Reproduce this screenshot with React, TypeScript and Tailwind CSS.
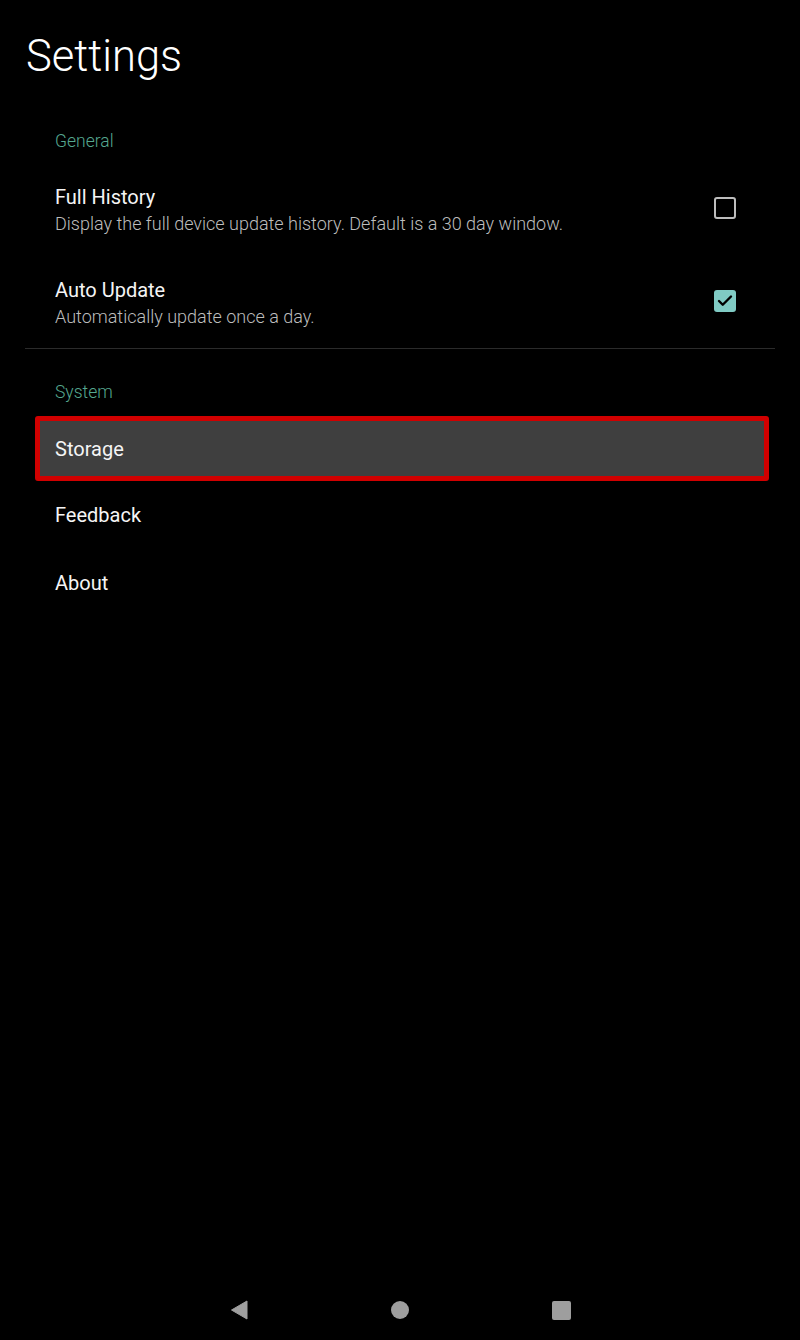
import { Check } from 'lucide-react'

const systemItems = ['Storage', 'Feedback', 'About']

const Checkbox = ({ checked }: { checked: boolean }) =>
  checked ? (
    <div className="mt-[13px] flex h-[22px] w-[22px] items-center justify-center rounded-[3px] bg-[#80cbc4]">
      <Check size={18} strokeWidth={3.2} className="text-black" />
    </div>
  ) : (
    <div className="mt-[13px] h-[22px] w-[22px] rounded-[3px] border-2 border-[#bdbdbd]" />
  )

const ToggleRow = ({ title, summary, checked }: { title: string; summary: string; checked: boolean }) => (
  <div className="flex items-start justify-between pl-[55px] pr-[64px]">
    <div className="flex flex-col">
      <span className="text-[20px] leading-[27px] text-[#f5f5f5]">{title}</span>
      <span className="text-[18px] font-light leading-[26px] text-[#bdbdbd]">{summary}</span>
    </div>
    <Checkbox checked={checked} />
  </div>
)

export default function App() {
  return (
    <div className="flex h-[1340px] w-full flex-col bg-black font-['Roboto',sans-serif]">
      <h1 className="mt-[34px] pl-[26px] text-[43.5px] font-light leading-[45px] text-white">Settings</h1>

      <div className="mt-[50px] pl-[55px] text-[17.5px] font-light leading-[24px] text-[#55a78f]">General</div>

      <div className="mt-[31px]">
        <ToggleRow
          title="Full History"
          summary="Display the full device update history. Default is a 30 day window."
          checked={false}
        />
      </div>
      <div className="mt-[40px]">
        <ToggleRow title="Auto Update" summary="Automatically update once a day." checked={true} />
      </div>

      <div className="mx-[25px] mt-[18px] h-px bg-[#2b2b2b]" />

      <div className="mt-[31px] pl-[55px] text-[17.5px] font-light leading-[24px] text-[#55a78f]">System</div>

      <div className="mt-[12px] flex flex-col pl-[35px] pr-[31px]">
        {systemItems.map((item, idx) =>
          idx === 0 ? (
            <div
              key={item}
              className="flex h-[65px] items-center rounded-[3px] border-[5px] border-[#d10000] bg-[#3f3f3f] pl-[15px] text-[20px] text-[#f5f5f5]"
            >
              {item}
            </div>
          ) : (
            <div key={item} className="flex h-[68px] items-center pl-[20px] text-[20px] text-[#f5f5f5]">
              {item}
            </div>
          )
        )}
      </div>

      {/* nav bar */}
      <div className="mt-auto flex h-[60px] items-center justify-center gap-[121px]">
        <div className="flex w-[40px] justify-center">
          <svg width="18" height="20" viewBox="0 0 18 20">
            <path d="M17 1 L1.5 10 L17 19 Z" fill="#9e9e9e" stroke="#9e9e9e" strokeWidth="1" strokeLinejoin="round" />
          </svg>
        </div>
        <div className="flex w-[40px] justify-center">
          <div className="h-[18px] w-[18px] rounded-full bg-[#9e9e9e]" />
        </div>
        <div className="flex w-[40px] justify-center">
          <div className="h-[19px] w-[19px] rounded-[2px] bg-[#9e9e9e]" />
        </div>
      </div>
    </div>
  )
}
